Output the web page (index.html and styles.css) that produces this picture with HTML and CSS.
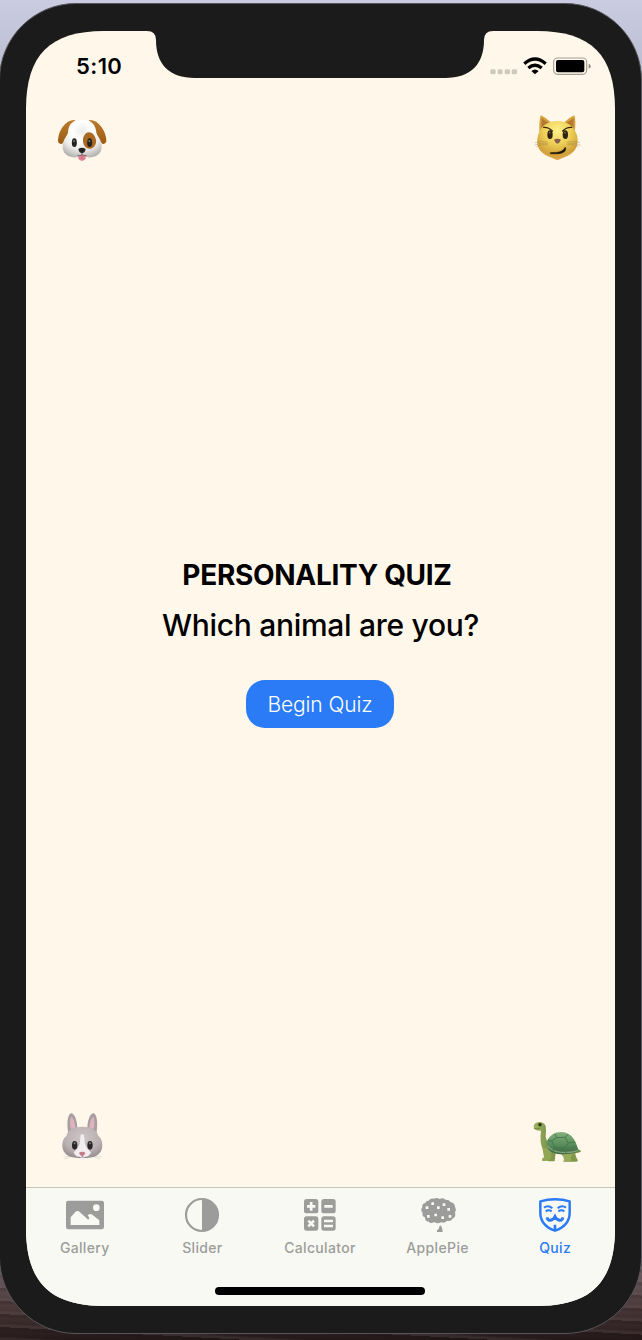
FILE: index.html
```html
<!DOCTYPE html>
<html lang="en">
<head>
<meta charset="utf-8">
<title>Personality Quiz</title>
<link rel="stylesheet" href="styles.css">
</head>
<body>
<main class="phone">
  <div class="screen">
    <svg class="notch" viewBox="0 0 350 47" aria-hidden="true"><path d="M0 0H2Q11 0 11 9C11 33 24 47 50 47H300C326 47 339 33 339 9Q339 0 348 0H350Z"/></svg>
    <header class="status">
      <span class="time">5:10</span>
      <svg class="status-icons" viewBox="501 165 318 66" aria-hidden="true">
        <g fill="#cfcabd"><rect x="508" y="208" width="16" height="15" rx="4"/><rect x="530" y="208" width="15" height="15" rx="4"/><rect x="551" y="208" width="16" height="15" rx="4"/><rect x="572" y="208" width="16" height="15" rx="4"/></g>
        <g fill="none" stroke="#000" stroke-width="10"><path d="M610 191Q642 163 674 191"/><path d="M622 204Q642 187 662 204"/></g>
        <path d="M631 213Q642 204 653 213L642 223Z"/>
        <rect x="698" y="174" width="99" height="49" rx="12" fill="none" stroke="#a39e93" stroke-width="3.5"/>
        <rect x="705" y="180" width="85" height="37" rx="6"/>
        <path d="M803 191Q809 193 809 198.500Q809 204 803 206Z" fill="#8c887f"/>
      </svg>
    </header>

    <section class="content">
      <div class="animals">
        <svg class="animal" viewBox="0 0 225 195" role="img" aria-label="Dog">
          <defs>
            <radialGradient id="dogFace" cx=".5" cy=".3" r=".72"><stop offset="0" stop-color="#ececea"/><stop offset=".35" stop-color="#fff"/><stop offset=".7" stop-color="#ebebea"/><stop offset="1" stop-color="#b5b4b3"/></radialGradient>
            <linearGradient id="dogEar" x1="0" y1="0" x2="0" y2="1"><stop offset="0" stop-color="#bd7a2c"/><stop offset="1" stop-color="#9c5b12"/></linearGradient>
          </defs>
          <path d="M91 45Q69 43 52 67Q39 87 39 109Q41 119 50 117Q64 108 70 91L80 58Z" fill="url(#dogEar)"/>
          <path d="M131 45Q154 43 170 67Q184 87 184 109Q182 119 173 117Q160 108 153 91L142 58Z" fill="url(#dogEar)"/>
          <path d="M111 44C84 44 70 57 69 82C67 94 53 103 53 124C53 145 66 155 83 157Q97 158 111 154Q128 158 140 157C157 155 170 145 170 124C170 103 156 94 154 82C152 57 138 44 111 44Z" fill="url(#dogFace)"/>
          <path d="M132 82C120 82 113 96 114 109C115 124 126 133 137 131C148 129 155 117 153 105C150 91 142 82 132 82Z" fill="#aa6820"/>
          <path d="M101 150L121 150L122 160Q119 168 111 168Q103 168 100 160Z" fill="#dd8292"/>
          <path d="M111 148V162" stroke="#ba6072" stroke-width="2"/>
          <g fill="#242322"><ellipse cx="88" cy="113" rx="7.500" ry="13"/><ellipse cx="134" cy="113" rx="7.500" ry="13"/><path d="M100 132Q111 125 122 132Q120 143 111 145Q102 143 100 132Z"/></g>
          <g fill="#777"><circle cx="87" cy="108" r="3"/><circle cx="133" cy="108" r="3"/></g>
          <path d="M111 144V149Q104 154 97 151M111 149Q118 154 125 151" fill="none" stroke="#575452" stroke-width="2"/>
        </svg>
        <svg class="animal" viewBox="0 0 225 195" role="img" aria-label="Cat">
          <defs>
            <radialGradient id="catFace" cx=".5" cy=".25" r=".78"><stop offset="0" stop-color="#fff28c"/><stop offset=".45" stop-color="#edcd55"/><stop offset=".78" stop-color="#d1a23a"/><stop offset="1" stop-color="#e9a24c"/></radialGradient>
          </defs>
          <path d="M58 81Q57 48 62 31Q78 38 94 53ZM164 81Q169 48 163 31Q147 38 131 53Z" fill="#d6a13b"/>
          <path d="M64 71L65 40L88 55ZM160 71L161 40L137 55Z" fill="#b67935"/>
          <path d="M112 48C83 48 61 64 54 91C46 123 58 142 84 154Q99 160 112 166Q125 160 140 154C166 142 178 123 171 91C163 64 141 48 112 48Z" fill="url(#catFace)"/>
          <g fill="#302311"><ellipse cx="90" cy="89" rx="8" ry="13"/><ellipse cx="136" cy="89" rx="8" ry="13"/></g>
          <g fill="#7b6a35"><circle cx="89" cy="83" r="2.500"/><circle cx="135" cy="83" r="2.500"/></g>
          <g fill="none" stroke="#362711" stroke-width="4" stroke-linecap="round"><path d="M71 67Q86 66 97 78M155 67Q139 66 128 78"/></g>
          <path d="M91 143C113 143 130 141 135 127Q138 127 137 134C132 147 114 147 91 146Z" fill="#191307" stroke="#191307" stroke-width="1.500" stroke-linejoin="round"/>
          <path d="M103 103Q112 99 122 103Q122 113 112 116Q103 113 103 103Z" fill="#84624d"/>
          <g fill="none" stroke="#8f7947" stroke-opacity=".55" stroke-width="2"><path d="M83 111Q60 106 45 113M83 115Q60 111 43 121M84 119Q64 116 49 125M142 111Q165 106 180 113M142 115Q165 111 182 121M141 119Q161 116 176 125"/></g>
        </svg>
      </div>

      <div class="hero">
        <h1 class="title">PERSONALITY QUIZ</h1>
        <h2 class="question">Which animal are you?</h2>
        <button class="begin" type="button">Begin Quiz</button>
      </div>

      <div class="animals">
        <svg class="animal" viewBox="0 0 225 195" role="img" aria-label="Rabbit">
          <defs>
            <radialGradient id="rabbitFace" cx=".5" cy=".35" r=".68"><stop offset="0" stop-color="#cdc5c6"/><stop offset=".65" stop-color="#bbb1b3"/><stop offset="1" stop-color="#958b8e"/></radialGradient>
          </defs>
          <path d="M70 87C65 58 67 29 78 25C91 24 98 54 97 78ZM154 87C159 58 157 29 146 25C133 24 126 54 127 78Z" fill="#a89da1"/>
          <path d="M77 71C74 48 76 36 80 36Q89 43 91 70ZM147 71C150 48 148 36 144 36Q135 43 133 70Z" fill="#deb4bc"/>
          <path d="M58 162L76 157M55 156L73 154M166 162L149 157M170 156L152 154" stroke="#d8d2cb" stroke-width="2"/>
          <path d="M112 65C83 65 68 76 64 93C56 98 52 109 52 121C52 141 65 153 82 157Q98 160 112 160Q127 160 142 157C159 153 172 141 172 121C172 109 168 98 160 93C156 76 141 65 112 65Z" fill="url(#rabbitFace)"/>
          <path d="M107 90Q112 86 117 90L120 118Q126 134 138 142Q133 155 119 157H105Q91 155 86 142Q98 134 104 118Z" fill="#f2eef0"/>
          <path d="M105 154H120V165Q112 169 105 165Z" fill="#f4f2f0"/>
          <path d="M102 143Q111 137 121 143Q119 151 112 154Q104 151 102 143Z" fill="#c67b87"/>
          <path d="M112 153V156Q105 159 99 156M112 156Q119 159 125 156" fill="none" stroke="#836c72" stroke-width="2"/>
          <g fill="#292729"><ellipse cx="89" cy="121" rx="8" ry="13"/><ellipse cx="135" cy="121" rx="8" ry="13"/></g>
          <g fill="#798083"><circle cx="89" cy="115" r="3"/><circle cx="135" cy="115" r="3"/></g>
        </svg>
        <svg class="animal" viewBox="0 0 225 195" role="img" aria-label="Turtle">
          <defs>
            <linearGradient id="turtleShell" x1="0" y1="0" x2="0" y2="1"><stop offset="0" stop-color="#84b17c"/><stop offset=".6" stop-color="#568b57"/><stop offset="1" stop-color="#376440"/></linearGradient>
            <linearGradient id="turtleSkin"><stop offset="0" stop-color="#9fb561"/><stop offset="1" stop-color="#6e8842"/></linearGradient>
          </defs>
          <path d="M168 134Q177 133 184 138Q179 144 165 144ZM84 141L107 144L104 169H85Q80 167 82 161ZM137 144L168 139Q163 150 172 163Q176 169 169 170H134Q130 163 137 159Z" fill="#81984b"/>
          <path d="M41 63Q43 53 57 51Q72 51 77 63Q79 76 77 95Q80 112 91 126L101 140L94 151Q77 149 68 132Q58 111 63 77Q49 78 42 71Z" fill="url(#turtleSkin)"/>
          <path d="M67 127L95 133L94 157Q88 169 74 168H67Q64 161 72 157L70 146Z" fill="#91a655"/>
          <path d="M104 143L124 148Q132 155 132 166L128 170H149Q156 167 152 158L159 144Z" fill="#98aa5c"/>
          <path d="M79 113C88 90 104 81 123 81C149 82 164 99 171 123L177 139Q155 149 125 148Q99 147 86 135Z" fill="url(#turtleShell)"/>
          <path d="M82 122Q98 142 126 142Q156 144 175 136" fill="none" stroke="#84a279" stroke-width="4"/>
          <path d="M104 87L110 98L95 108L83 106M110 98L136 97L145 87M95 108L104 127L98 139M104 127L134 130L145 114L136 97M134 130L139 146M145 114L165 111M155 126L171 126" fill="none" stroke="#477650" stroke-width="3"/>
          <circle cx="60" cy="59" r="5" fill="#27300f"/><path d="M42 70Q51 74 60 69" fill="none" stroke="#607638" stroke-width="2"/>
        </svg>
      </div>
    </section>

    <footer class="dock">
      <nav class="tabs">
        <a class="tab">
          <svg class="tab-icon" viewBox="0 0 180 108" aria-hidden="true"><path fill="currentColor" fill-rule="evenodd" d="M40 11H140Q147 11 147 18V90Q147 97 140 97H40Q33 97 33 90V18Q33 11 40 11ZM124 22a10 10 0 1 0 0 20a10 10 0 1 0 0-20ZM47 84H133V70L113 54Q107 49 100 53L98 55L103 63Q103 68 98 67L74 45Q67 39 61 45L47 61Z"/></svg>
          <span class="tab-label">Gallery</span>
        </a>
        <a class="tab">
          <svg class="tab-icon" viewBox="0 0 180 108" aria-hidden="true"><circle cx="90" cy="54" r="48" fill="none" stroke="currentColor" stroke-width="6.500"/><path fill="currentColor" d="M90 6a48 48 0 0 1 0 96Z"/></svg>
          <span class="tab-label">Slider</span>
        </a>
        <a class="tab">
          <svg class="tab-icon" viewBox="0 0 180 108" aria-hidden="true"><g fill="currentColor"><rect x="42" y="6" width="43" height="43" rx="8"/><rect x="94" y="6" width="43" height="43" rx="8"/><rect x="42" y="58" width="43" height="43" rx="8"/><rect x="94" y="58" width="43" height="43" rx="8"/></g><g fill="none" stroke="#f8f9f3" stroke-width="8"><path d="M51 28H76M63.500 15V41M103 28H128M55 71L72 88M72 71L55 88M102 72H129M102 87H129"/></g></svg>
          <span class="tab-label">Calculator</span>
        </a>
        <a class="tab">
          <svg class="tab-icon" viewBox="0 0 180 108" aria-hidden="true"><path fill="currentColor" d="M62 11Q67 3 77 5Q86 0 95 6Q105 1 112 8Q124 7 127 15Q140 17 141 29Q146 37 141 46Q145 60 134 65Q128 74 117 71Q110 80 99 76Q88 82 79 75Q68 82 62 74Q50 73 51 61Q41 58 44 48Q36 40 43 31Q41 20 52 18Q55 10 62 11ZM95 86Q98 84 100 87L104 101V105H87V100Q94 96 95 86Z"/><path d="M70 16h8v8h-8zM104 19h8v8h-8zM53 28h8v8h-8zM87 28h8v8h-8zM118 33h8v8h-8zM79 50h8v8h-8zM57 54h8v8h-8zM122 54h8v8h-8zM100 58h8v8h-8z" fill="#f8f9f3"/></svg>
          <span class="tab-label">ApplePie</span>
        </a>
        <a class="tab tab-active">
          <svg class="tab-icon" viewBox="0 0 180 108" aria-hidden="true"><path fill="none" stroke="currentColor" stroke-width="7.500" stroke-linejoin="round" d="M46 13Q67 7 90 7Q114 7 134 13V47C134 77 115 92 90 101C65 92 46 77 46 47Z"/><g fill="none" stroke="currentColor" stroke-width="6"><path d="M57 32Q70 23 82 34M98 34Q110 23 123 32M62 43Q71 37 80 43M100 43Q109 37 118 43"/><path d="M66 61Q69 73 79 69Q86 67 90 59Q94 67 101 69Q111 73 114 61" stroke-width="9"/><path d="M90 83V100" stroke-width="8"/></g></svg>
          <span class="tab-label">Quiz</span>
        </a>
      </nav>
      <div class="home-indicator"></div>
    </footer>
  </div>
</main>
</body>
</html>
```

FILE: styles.css
```css
* { box-sizing: border-box; }

body {
  margin: 0;
  height: 1340px;
  padding: 3px 0 6px;
  overflow: hidden;
  font-family: Inter, "Liberation Sans", sans-serif;
  color: #000;
  background:
    repeating-linear-gradient(3deg, rgba(120, 103, 107, .2) 0 2px, transparent 4px 9px, rgba(15, 8, 8, .18) 11px 13px) 0 100% / 100% 80px no-repeat,
    linear-gradient(#77686f, #4a3839 60%, #241818) 0 100% / 100% 80px no-repeat,
    linear-gradient(#cacce1, #b4b6ca 100px);
}

.phone {
  height: 1331px;
  margin-left: -1px;
  padding: 27px 26px;
  border: 1px solid #56565a;
  border-radius: 77px;
  background: #1b1b1b;
}

.screen {
  position: relative;
  display: flex;
  flex-direction: column;
  width: 589px;
  height: 1275px;
  background: #fff8ea;
  clip-path: path("M0 78C0 24 24 0 78 0H511C565 0 589 24 589 78V1197C589 1251 565 1275 511 1275H78C24 1275 0 1251 0 1197Z");
}

.notch {
  position: absolute;
  top: 0;
  left: 119px;
  width: 350px;
  height: 47px;
  fill: #1b1b1b;
}

.status {
  display: flex;
  justify-content: space-between;
  height: 74px;
  padding: 24px 21px 0 50px;
}

.time {
  font-size: 22px;
  font-weight: 600;
  line-height: 23px;
  letter-spacing: .4px;
}

.status-icons { width: 106px; height: 22px; }

.content {
  display: flex;
  flex: 1;
  flex-direction: column;
  padding-bottom: 17px;
}

.animals {
  display: flex;
  justify-content: space-between;
  padding: 0 20px 0 19px;
}

.animal { width: 75px; height: 65px; }

.hero {
  display: flex;
  flex: 1;
  flex-direction: column;
  align-items: center;
  padding-top: 388px;
}

.title {
  margin: 0 7px 14px 0;
  font-size: 28px;
  font-weight: 650;
  line-height: 34px;
  letter-spacing: -.3px;
}

.question {
  margin: 0 0 34px;
  font-size: 30px;
  font-weight: 550;
  line-height: 39px;
  letter-spacing: -.3px;
  padding-bottom: 1px;
}

.begin {
  width: 148px;
  height: 48px;
  margin-right: 1px;
  padding: 0;
  border: 0;
  border-radius: 19px;
  background: #2b7bf6;
  color: #fff;
  font-family: inherit;
  font-size: 21px;
  font-weight: 350;
  letter-spacing: -.1px;
}

.dock {
  display: flex;
  flex-direction: column;
  align-items: center;
  height: 119px;
  border-top: 1px solid #c7c5b9;
  background: #f8f9f3;
}

.tabs {
  display: grid;
  grid-template-columns: repeat(5, 1fr);
  width: 100%;
  padding: 9px 1px 0 0;
}

.tab {
  display: flex;
  flex-direction: column;
  align-items: center;
  gap: 6px;
  color: #9c9d9a;
}

.tab-active { color: #2b7bf6; }

.tab-icon { width: 60px; height: 36px; }

.tab-label {
  font-size: 14px;
  font-weight: 500;
  line-height: 18px;
  letter-spacing: .35px;
}

.home-indicator {
  width: 210px;
  height: 7.500px;
  margin: 30px 1px 0 0;
  border-radius: 4px;
  background: #000;
}
```
